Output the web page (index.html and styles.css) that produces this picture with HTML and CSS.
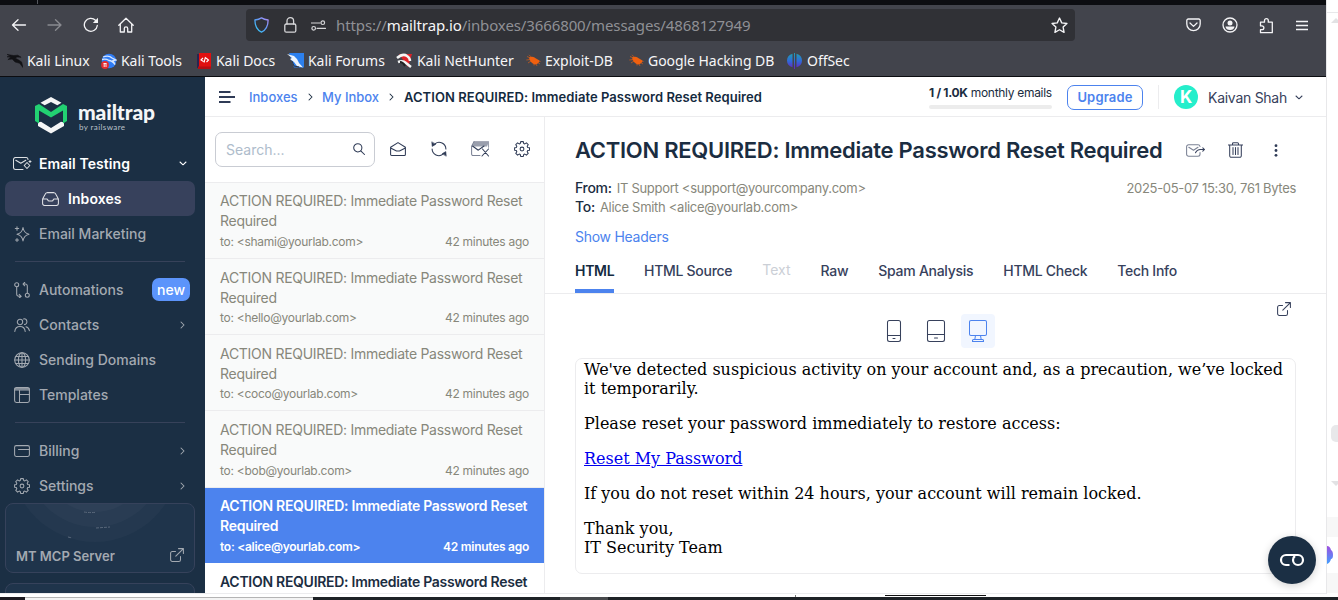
FILE: index.html
```html
<!DOCTYPE html>
<html lang="en">
<head>
<meta charset="utf-8">
<title>Mailtrap - My Inbox</title>
<link rel="stylesheet" href="styles.css">
</head>
<body>
<svg width="0" height="0" class="defs">
  <defs>
    <linearGradient id="gShield" x1="0" y1="1" x2="1" y2="0"><stop offset="0" stop-color="#2fd0f5"/><stop offset=".5" stop-color="#5a9cf5"/><stop offset="1" stop-color="#b48cf5"/></linearGradient>
    <linearGradient id="gOff" x1="0" y1="0" x2="0" y2="1"><stop offset="0" stop-color="#1fa0b0"/><stop offset=".5" stop-color="#2f6bd8"/><stop offset="1" stop-color="#6a1fc0"/></linearGradient>
    <linearGradient id="gBrain" x1="0" y1="0" x2="0" y2="1"><stop offset="0" stop-color="#a04fe0"/><stop offset="1" stop-color="#3fa0ff"/></linearGradient>
    <symbol id="gear" viewBox="0 0 16 16"><path d="M6.7.6h2.6l.4 1.8 1.1.5 1.6-1 1.8 1.8-1 1.6.4 1.1 1.9.4v2.4l-1.9.4-.4 1.1 1 1.6-1.8 1.8-1.6-1-1.1.5-.4 1.8H6.7l-.4-1.8-1.1-.5-1.6 1-1.8-1.8 1-1.6-.4-1.1L.6 9.200V6.800l1.800-.4.4-1.100-1-1.600L3.600 1.900l1.600 1 1.100-.5z"/><circle cx="8" cy="8" r="1.900"/></symbol>
    <symbol id="ext" viewBox="0 0 14 14"><path d="M5.500 3.500H2.300a1.700 1.700 0 0 0-1.700 1.700v6.500a1.700 1.700 0 0 0 1.700 1.700h6.500a1.700 1.700 0 0 0 1.700-1.700V8.500M8.500.6h4.900v4.900M13.200.8L5.800 8.200"/></symbol>
    <symbol id="crab" viewBox="0 0 15 13"><path d="M1 2.500l4 1.800M3 .8l3 3M.3 6l4-.5M2 9l3-2M14 10l-3-2M14.500 7.500L11 7M8 11.500L8 9M11 12L9.500 9" stroke="#c85a1c" stroke-width=".8"/><path d="M3 3.500Q7 1.500 10 4.500L13.500 6.500Q13 10 9 10.500Q4 9 3 3.500z" fill="#f0600f"/></symbol>
  </defs>
</svg>
<div class="screen">
  <div class="window">
    <div class="titlebar"><i></i></div>
    <div class="navbar">
      <svg class="ff b1" width="16" height="16" viewBox="0 0 16 16"><path d="M14.500 8H1.500M7 2.800L1.500 8l5.500 5.200"/></svg>
      <svg class="ff b2" width="16" height="16" viewBox="0 0 16 16"><path d="M1 8h13M8.500 2.800L14 8l-5.500 5.200"/></svg>
      <svg class="ff b3" width="16" height="16" viewBox="0 0 16 16"><path d="M14.300 8.500A6.500 6.500 0 1 1 12.500 3.300L14 5"/><path d="M9.800 6h5.200V.8z" fill="#f4f4f6" stroke="none"/></svg>
      <svg class="ff b4" width="16" height="16" viewBox="0 0 16 16"><path d="M.8 8.200L8 1.300l7.200 6.900M2.300 7v8h4v-3.500a1.700 1.700 0 0 1 3.400 0V15h4V7"/></svg>
      <div class="urlbar">
        <svg class="ff u1" width="15" height="16" viewBox="0 0 15 16"><path stroke="url(#gShield)" d="M7.500.9C5.500 2.200 3 2.800.9 3c0 6 2 10 6.600 12.100C12.100 13 14.100 9 14.100 3 12 2.800 9.500 2.200 7.500.9z"/></svg>
        <svg class="ff u2" width="13" height="16" viewBox="0 0 13 16"><rect x=".8" y="7" width="11" height="8.200" rx="1.500"/><path d="M3 7V4a3.300 3.300 0 0 1 6.600 0v3"/></svg>
        <svg class="ff u3" width="15" height="11" viewBox="0 0 15 11"><path d="M0 3h9M6 8.300h8.500"/><circle cx="11.800" cy="2.700" r="1.800"/><circle cx="2.700" cy="8.300" r="1.800"/></svg>
        <span class="url">https://<b>mailtrap.io</b>/inboxes/3666800/messages/4868127949</span>
        <svg class="ff star" width="17" height="17" viewBox="0 0 16 16"><path d="M8 1l2.100 4.500 4.900.6-3.600 3.400.9 4.900L8 12l-4.300 2.400.9-4.900L1 6.100l4.900-.6z"/></svg>
      </div>
      <svg class="ff m1" width="15" height="14" viewBox="0 0 15 14"><path d="M2.300 1h10.400A1.500 1.500 0 0 1 14.200 2.500V6a6.700 6.700 0 0 1-13.400 0V2.500A1.500 1.500 0 0 1 2.300 1zM4 5l3.500 3.400L11 5"/></svg>
      <svg class="ff m2" width="16" height="16" viewBox="0 0 16 16"><circle cx="8" cy="8" r="7"/><circle cx="8" cy="5.900" r="2.500" fill="#f4f4f6" stroke="none"/><path d="M3.500 9.500h9Q12 13 8 13t-4.500-3.500z" fill="#f4f4f6" stroke="none"/></svg>
      <svg class="ff m3" width="15" height="17" viewBox="0 0 15 17"><path d="M1.500 5.200h4V3.500a1.900 1.900 0 0 1 3.800 0v1.700h4v10.500h-11.800v-3H3a1.700 1.700 0 0 0 0-3.800H1.500z"/></svg>
      <svg class="ff m4" width="12" height="11" viewBox="0 0 12 11"><path d="M0 1.500h12M0 5.500h12M0 9.500h12"/></svg>
    </div>
    <div class="bookmarks">
      <a class="k1"><svg width="16" height="16" viewBox="0 0 17 16"><path d="M0 1l7 1.200 4.500-.4L15 4l-4.500-.2-1.500 1.200 3 1.700 3.500 2.300L17 15l-3.500-4.500L8.500 9 5.500 6 1 6.500 4 4 0 3.500 4 3z" fill="#111215" stroke="#111215" stroke-width=".6"/></svg>Kali Linux</a>
      <a class="k2"><svg width="16" height="16" viewBox="0 0 16 16"><circle cx="8" cy="8" r="7.300" fill="#2f7cf5"/><path d="M2 4q6-2 9 1l4 2-3 .5 2 4q-3-4-6-4-3-2-7-1" fill="none" stroke="#d4e5ff" stroke-width="1.300"/><circle cx="4" cy="12" r="3.900" fill="#e42c30"/><path d="M2.500 10.500h3M3.200 10.500v3.500M5 10.500v3.500" stroke="#fff" stroke-width=".9"/></svg>Kali Tools</a>
      <a class="k3"><svg width="14" height="16" viewBox="0 0 14 16"><path fill="#e01010" d="M2 0h12v16H2z"/><path fill="#2a2450" d="M0 1h2v14H0z"/><path d="M1 13.500h13V16H1z" fill="#b40d12"/><path d="M6 5L4 7 6.500 8.500M9 5L11.500 7 9.500 9M8.500 4L7 9.500" fill="none" stroke="#fff" stroke-width="1.100"/></svg>Kali Docs</a>
      <a class="k4"><svg width="17" height="15" viewBox="0 0 17 15"><path d="M2 0h15v14.500H7z" fill="#2c80ee"/><path d="M0 1l7 2 3 3 2 4 4 4.500-6-1.500-3-4-4-3 2-1z" fill="#eef4fb"/><path d="M5 8l2 5 5 1" stroke="#32343a" fill="none"/></svg>Kali Forums</a>
      <a class="k5"><svg width="17" height="15" viewBox="0 0 17 15"><path d="M3 1h13l-4 13z" fill="#dd2228"/><path d="M1 5q6-5 10-2 3 2 3 5M2 9q5-2 8 1l5 4" fill="none" stroke="#f3f3f3" stroke-width="2.500"/><path d="M4 9q3 0 5 4" fill="none" stroke="#222" stroke-width="2"/></svg>Kali NetHunter</a>
      <a class="k6"><svg width="15" height="13"><use href="#crab"/></svg>Exploit-DB</a>
      <a class="k7"><svg width="15" height="13"><use href="#crab"/></svg>Google Hacking DB</a>
      <a class="k8"><svg width="15" height="16" viewBox="0 0 15 16"><path d="M5.500 .8v13.400Q0 12.500 0 7.500T5.500 .8zM7 0h1v16H7zM9.500 .8Q15 2.500 15 7.500t-5.500 6.700z" fill="url(#gOff)"/></svg>OffSec</a>
    </div>
    <div class="app">
      <nav class="side">
        <div class="brand">
          <svg width="32" height="37" viewBox="0 0 32 37"><path d="M16 0l10.500 5.700-4.200 2.600L16 5 9.700 8.300 5.500 5.700zM16 36.500L3 29v-3.500l3-.8L16 31l10-6.300 3 .8V29z" fill="#f5f6f7"/><path d="M0 9l4-2 12 8 12-8 4 2v15l-4 2.500V13.500L16 20.500 4 13.500v13L0 24z" fill="#22d172"/></svg>
          <div class="word"><b>mailtrap</b><small>by railsware</small></div>
        </div>
        <a class="row white"><svg class="ic" width="19" height="14" viewBox="0 0 19 14"><path d="M10 12.500H2.500a2 2 0 0 1-2-2v-8a2 2 0 0 1 2-2h10.500a2 2 0 0 1 2 2M2.800 3.200L7.800 6.300 12.800 3.200M14 5.500l2.800 3L14 11.500l-2.800-3zM17 3.500v2M16 4.500h2"/></svg><span>Email Testing</span><svg class="ic chev" width="8" height="5" viewBox="0 0 8 5"><path d="M1 1l3 2.800L7 1"/></svg></a>
        <a class="row white sel"><svg class="ic" width="17" height="14" viewBox="0 0 17 14"><path d="M.6 7v4.500a2 2 0 0 0 2 2h11.800a2 2 0 0 0 2-2V7M.6 7L3 2.500A3 3 0 0 1 5.500.6h6A3 3 0 0 1 14 2.500L16.400 7M.6 7h4q1 0 1.200 1 .3 1 1.200 1h3q.9 0 1.200-1 .2-1 1.200-1h4"/></svg><span>Inboxes</span></a>
        <a class="row"><svg class="ic" width="16" height="16" viewBox="0 0 16 16"><path d="M9 1.500q.8 5.500 6 6.700-5.200 1.200-6 6.700-.8-5.500-6-6.700 5.200-1.200 6-6.700zM3 .8v3.400M1.300 2.500h3.400M3 12.500v3M1.500 14h3"/></svg><span>Email Marketing</span></a>
        <hr>
        <a class="row"><svg class="ic" width="16" height="16" viewBox="0 0 16 16"><circle cx="2.700" cy="2.700" r="2"/><circle cx="13.300" cy="13.300" r="2"/><path d="M2.700 4.800v7.500a2 2 0 0 0 2 2h2M5.200 12.300l2 2-2 1.700M13.300 11V4a2 2 0 0 0-2-2h-2M10.700.3L9 2l1.700 1.800"/></svg><span>Automations</span><em>new</em></a>
        <a class="row"><svg class="ic" width="16" height="14" viewBox="0 0 16 14"><circle cx="6" cy="4" r="2.700"/><path d="M.8 13.500Q1.300 8.500 6 8.500t5.200 5M9.500.9a2.800 2.800 0 1 1 1 5.700M12 8.700q2.800.8 3.400 4"/></svg><span>Contacts</span><svg class="ic chev" width="5" height="8" viewBox="0 0 5 8"><path d="M1 1l3 3-3 3"/></svg></a>
        <a class="row"><svg class="ic" width="16" height="16" viewBox="0 0 16 16"><circle cx="8" cy="8" r="7.300"/><ellipse cx="8" cy="8" rx="3.600" ry="7.300"/><path d="M.7 8h14.600M8 .7v14.600M1.800 4.500h12.400M1.800 11.500h12.400"/></svg><span>Sending Domains</span></a>
        <a class="row"><svg class="ic" width="16" height="16" viewBox="0 0 16 16"><rect x=".6" y=".6" width="14.800" height="14.800" rx="1.800"/><path d="M.6 3h14.800M5.500 3v12.400M5.500 7.500h9.900M.6 1.800h14.800"/></svg><span>Templates</span></a>
        <hr>
        <a class="row"><svg class="ic" width="16" height="12" viewBox="0 0 16 12"><rect x=".6" y=".6" width="14.800" height="10.800" rx="1.600"/><path d="M4.500 4.500h11"/></svg><span>Billing</span><svg class="ic chev" width="5" height="8" viewBox="0 0 5 8"><path d="M1 1l3 3-3 3"/></svg></a>
        <a class="row"><svg class="ic" width="16" height="16"><use href="#gear"/></svg><span>Settings</span><svg class="ic chev" width="5" height="8" viewBox="0 0 5 8"><path d="M1 1l3 3-3 3"/></svg></a>
        <div class="card">
          <svg class="rings" width="188" height="68" viewBox="0 0 188 68"><circle cx="89" cy="-46" r="84"/><circle cx="89" cy="-46" r="69"/><circle cx="89" cy="-46" r="54"/><path d="M90 24l14-1M78 8q6 1 12 .3M62 33l4 1" class="dash"/></svg>
          <span>MT MCP Server</span><svg class="ic" width="14" height="14"><use href="#ext"/></svg>
        </div>
        <div class="card next"><i></i></div>
      </nav>
      <div class="content">
        <header class="top">
          <svg class="burger" width="16" height="12" viewBox="0 0 16 12"><path d="M0 1h11.500M0 6h16M0 11h11.500"/></svg>
          <a class="c1">Inboxes</a><svg class="ic sep" width="5" height="8" viewBox="0 0 5 8"><path d="M1 1l3 3-3 3"/></svg><a class="c2">My Inbox</a><svg class="ic sep" width="5" height="8" viewBox="0 0 5 8"><path d="M1 1l3 3-3 3"/></svg><b class="c3">ACTION REQUIRED: Immediate Password Reset Required</b>
          <div class="usage"><p><b>1 / 1.0K</b> monthly emails</p><i></i></div>
          <button class="up">Upgrade</button>
          <div class="user"><span class="av">K</span><span class="nm">Kaivan Shah</span><svg class="ic" width="8" height="5" viewBox="0 0 8 5"><path d="M1 1l3 2.800L7 1"/></svg></div>
        </header>
        <div class="cols">
          <section class="list">
            <div class="tools">
              <div class="search"><span>Search...</span><svg class="ic" width="12" height="12" viewBox="0 0 12 12"><circle cx="4.800" cy="4.800" r="4.100"/><path d="M7.800 7.800l3.700 3.700"/></svg></div>
              <svg class="ic t1" width="16" height="14" viewBox="0 0 16 14"><path d="M.6 5.300L8 .6l7.400 4.700v7.100a1 1 0 0 1-1 1H1.600a1 1 0 0 1-1-1zM.6 6L6.500 9h3l5.900-3"/></svg>
              <svg class="ic t2" width="16" height="16" viewBox="0 0 16 16"><path d="M4 2.800a6.800 6.800 0 0 1 10.900 5.200M12 13.200A6.800 6.800 0 0 1 1.100 8"/><path d="M.8 1.200l.4 4.200 3.400-2zM15.200 14.800l-.4-4.200-3.400 2z" fill="#2f3b56" stroke-width=".6"/></svg>
              <svg class="ic t3" width="19" height="16" viewBox="0 0 19 16"><path d="M3 .5h15l-2 5H1.500z" fill="#9a9fad" stroke="none"/><path d="M3 .8h14.500v5.500" stroke="#9a9fad"/><path d="M9 14.500H2a1.400 1.400 0 0 1-1.400-1.400V5.200L3 .8" stroke="#7b8295"/><path d="M1.500 5l5.800 4.200L13 5M11.500 8l6 7M17.500 8l-6.500 7"/></svg>
              <svg class="ic t4" width="16" height="16"><use href="#gear"/></svg>
            </div>
            <article class="first"><h4>ACTION REQUIRED: Immediate Password Reset Required</h4><p><span>to: &lt;shami@yourlab.com&gt;</span><time>42 minutes ago</time></p></article>
            <article><h4>ACTION REQUIRED: Immediate Password Reset Required</h4><p><span>to: &lt;hello@yourlab.com&gt;</span><time>42 minutes ago</time></p></article>
            <article><h4>ACTION REQUIRED: Immediate Password Reset Required</h4><p><span>to: &lt;coco@yourlab.com&gt;</span><time>42 minutes ago</time></p></article>
            <article class="tall"><h4>ACTION REQUIRED: Immediate Password Reset Required</h4><p><span>to: &lt;bob@yourlab.com&gt;</span><time>42 minutes ago</time></p></article>
            <article class="on"><h4>ACTION REQUIRED: Immediate Password Reset Required</h4><p><span>to: &lt;alice@yourlab.com&gt;</span><time>42 minutes ago</time></p></article>
            <article class="unread"><h4>ACTION REQUIRED: Immediate Password Reset</h4></article>
          </section>
          <main class="msg">
            <div class="head">
              <h1>ACTION REQUIRED: Immediate Password Reset Required</h1>
              <svg class="ic a1" width="19" height="13" viewBox="0 0 19 13"><path d="M14 8.500v1.700a2 2 0 0 1-2 2H2.600a2 2 0 0 1-2-2V2.800a2 2 0 0 1 2-2H12a2 2 0 0 1 2 1.700M2.800 3.300l4.700 3 4.500-3" stroke="#7b8295"/><path d="M9.500 8.800q1.500-3.300 5-3.300h4M16.800 3.800l1.700 1.700-1.700 1.700"/></svg>
              <svg class="ic a2" width="15" height="16" viewBox="0 0 15 16"><path d="M.3 3h14.400M4.500 3V1.700A1 1 0 0 1 5.500.7h4a1 1 0 0 1 1 1V3M1.700 3v10.800a1.500 1.500 0 0 0 1.500 1.500h8.600a1.500 1.500 0 0 0 1.500-1.500V3M5 5.500v7M7.500 5.500v7M10 5.500v7"/></svg>
              <svg class="a3" width="4" height="13" viewBox="0 0 4 13"><circle cx="2" cy="1.700" r="1.400"/><circle cx="2" cy="6.500" r="1.400"/><circle cx="2" cy="11.300" r="1.400"/></svg>
            </div>
            <div class="meta"><div><p><b>From:</b><span>IT Support &lt;support@yourcompany.com&gt;</span></p><p><b>To:</b><span>Alice Smith &lt;alice@yourlab.com&gt;</span></p></div><time>2025-05-07 15:30, 761 Bytes</time></div>
            <a class="show">Show Headers</a>
            <div class="tabs"><span class="cur">HTML</span><span>HTML Source</span><span class="off">Text</span><span>Raw</span><span>Spam Analysis</span><span>HTML Check</span><span>Tech Info</span></div>
            <div class="devices">
              <svg class="ic" width="34" height="34" viewBox="0 0 34 34"><rect x="10.500" y="6.500" width="13" height="21" rx="2"/><path d="M10.500 21.500h13M16 24.500h2"/></svg>
              <svg class="ic" width="34" height="34" viewBox="0 0 34 34"><rect x="8.500" y="6.500" width="17" height="21" rx="2"/><path d="M8.500 20.500h17M15.500 24h3"/></svg>
              <svg class="ic act" width="34" height="34" viewBox="0 0 34 34"><rect x="8.500" y="6.500" width="17" height="15" rx="1.500"/><path d="M14.500 21.500l-.7 4M19.500 21.500l.7 4M11.500 27.500v-1q0-1 1-1h9q1 0 1 1v1z"/></svg>
              <svg class="ic ext" width="14" height="14"><use href="#ext"/></svg>
            </div>
            <div class="mail">
              <p>We've detected suspicious activity on your account and, as a precaution, we’ve locked it temporarily.</p>
              <p>Please reset your password immediately to restore access:</p>
              <p><a>Reset My Password</a></p>
              <p>If you do not reset within 24 hours, your account will remain locked.</p>
              <p>Thank you,<br>IT Security Team</p>
            </div>
          </main>
        </div>
      </div>
      <div class="fab"><svg width="26" height="14" viewBox="0 0 26 14"><path d="M10.500 12H7A5 5 0 0 1 7 2h12a5 5 0 1 1-5 5 5 5 0 0 1 2-4"/></svg></div>
    </div>
  </div>
  <aside class="edge"><i class="ln"></i><i class="tri"></i><i class="thumb"></i><i class="tri down"></i><div class="peek"><svg width="6" height="18" viewBox="0 0 6 18"><path d="M0 0q3 0 4 4 2 1 2 5t-2 4q-1 4-4 5z" fill="url(#gBrain)"/></svg></div></aside>
  <footer class="dock"><i class="d1"></i><i class="d2"></i><i class="d3"></i><i class="d4"></i><i class="d5"></i><i class="tick"></i><i class="bar"></i></footer>
</div>
</body>
</html>
```
FILE: styles.css
```css
* { box-sizing: border-box; }
body { margin: 0; font-family: Inter, "Liberation Sans", sans-serif; color: #1b2d41; font-size: 14px; }
p, h1, h4 { margin: 0; font-weight: 400; }
svg { flex: none; display: block; }
.defs { position: absolute; }
.screen { width: 1338px; height: 600px; overflow: hidden; display: grid; grid-template: 594px 6px / 1326px 12px; background: #fff; }
.window { display: flex; flex-direction: column; min-width: 0; }

/* browser chrome */
.titlebar { height: 5px; background: #0c0d11; padding-left: 37px; }
.titlebar i { display: block; width: 1px; height: 4px; background: #55575e; }
.navbar { height: 40px; background: #42444c; display: flex; align-items: center; }
.ff { fill: none; stroke: #f4f4f6; stroke-width: 1.3; stroke-linejoin: round; stroke-linecap: round; }
.b1 { margin-left: 11px; }
.b2 { margin-left: 20px; opacity: .4; }
.b3 { margin-left: 20px; }
.b4 { margin-left: 19px; }
.urlbar { width: 829px; height: 32px; margin-left: 112px; background: #303136; border-radius: 4px; display: flex; align-items: center; padding-left: 8px; }
.u2 { margin-left: 15px; opacity: .85; }
.u3 { margin-left: 14px; opacity: .85; stroke-width: 1.2; }
.url { font: 15px "Noto Sans", sans-serif; color: #8f9095; margin-left: 10px; letter-spacing: -.11px; white-space: nowrap; width: 416px; }
.url b { font-weight: 400; color: #f6f6f8; }
.star { margin-left: 299px; }
.m1 { margin-left: 111px; }
.m2 { margin-left: 21px; }
.m3 { margin-left: 21px; }
.m4 { margin-left: 22px; }
.bookmarks { height: 32px; background: #42444c; border-bottom: 1px solid #0c0d11; display: grid; grid-template-columns: 94px 96px 90px 109px 130px 103px 158px 1fr; padding-left: 7px; font: 14px/31px "Noto Sans", sans-serif; color: #f6f6f8; }
.bookmarks a { display: flex; align-items: center; gap: 4px; white-space: nowrap; letter-spacing: -.05px; }
.bookmarks .k3 { gap: 5px; }
.bookmarks .k8 { gap: 5px; }

/* sidebar */
.app { height: 517px; display: flex; position: relative; overflow: hidden; border-bottom: 1px solid #ececee; }
.side { width: 205px; background: #1b2f44; padding: 0 10px 0 5px; flex: none; overflow: hidden; }
.brand { height: 69px; padding: 20px 0 0 30px; display: flex; gap: 11px; }
.word { color: #f5f6f7; padding-top: 2px; }
.word b { display: block; font: 900 21px/26px Lato, sans-serif; letter-spacing: -.1px; }
.word small { display: block; font: 400 8px/9px Lato, sans-serif; letter-spacing: .4px; color: #b9c0c9; margin-top: -2px; padding-left: 1px; }
.ic { fill: none; stroke: currentColor; stroke-width: 1.05; stroke-linejoin: round; stroke-linecap: round; }
.row { height: 35px; display: flex; align-items: center; padding: 0 10px 0 9px; color: #a3a9b1; font-weight: 500; font-size: 14px; }
.row > .ic:first-child { margin-right: 9px; }
.row > span { flex: 1; }
.row.white { color: #fff; font-weight: 600; padding-right: 8px; }
.row.white > .ic:first-child { margin-left: -1px; margin-right: 7px; opacity: .85; }
.row.white > span { letter-spacing: .08px; }
.row.sel { background: #37415c; border-radius: 7px; padding-left: 37px; }
.row.sel > .ic:first-child { margin-left: 0; margin-right: 9px; }
.row em { font-style: normal; background: #5c94fb; color: #fff; border-radius: 7px; height: 23px; line-height: 23px; padding: 0 5px; margin-right: -5px; }
.side hr { border: 0; height: 1px; background: #37425a; margin: 10px 0 10px 10px; width: 170px; }
.card { height: 70px; border: 1px solid #36425b; border-radius: 8px; background: #1f344b; display: flex; align-items: flex-end; justify-content: space-between; padding: 0 10px 8px 10px; color: #a3a9b1; font-weight: 600; font-size: 13px; position: relative; overflow: hidden; }
.card .ic { margin-bottom: 2px; }
.rings { position: absolute; left: 0; top: 0; fill: #fff; fill-opacity: .025; }
.rings .dash { stroke: #5a687b; fill: none; stroke-dasharray: 3 1; }
.card.next { margin-top: 10px; }
.card.next i { position: absolute; left: 46px; top: 9px; width: 14px; height: 9px; border-radius: 50%; background: #41589e; }

/* top bar */
.content { flex: 1; min-width: 0; display: flex; flex-direction: column; }
.top { height: 40px; border-bottom: 1px solid #ececee; display: flex; align-items: center; padding: 1px 0 0 14px; white-space: nowrap; font-size: 13px; }
.burger { stroke: #2f3b56; stroke-width: 2; }
.top a { color: #4c83ee; font-weight: 500; }
.c1 { width: 49px; margin-left: 14px; }
.c2 { width: 57px; }
.sep { margin: 0 9px 0 10px; }
.c2 + .sep { margin: 0 10px 0 10px; }
.c3 { width: 358px; font-weight: 600; color: #142a40; font-size: 13px; letter-spacing: .05px; }
.usage { width: 123px; margin-left: 167px; font-size: 12px; letter-spacing: -.3px; }
.usage b { font-weight: 700; }
.usage p { line-height: 15px; margin-top: -1px; }
.usage i { display: block; height: 4px; border-radius: 2px; background: #ececec; margin-top: 5px; }
.up { margin: 0 0 0 15px; width: 76px; height: 25px; border: 1px solid #4c83ee; border-radius: 7px; background: #fff; color: #4c83ee; font: 600 13px Inter, sans-serif; padding: 0; letter-spacing: .15px; }
.user { display: flex; align-items: center; margin-left: 15px; border-left: 1px solid #ececee; height: 24px; padding-left: 15px; color: #37415c; font-size: 14px; }
.av { width: 24px; height: 24px; border-radius: 50%; background: #25eecb; color: #fff; font-weight: 700; font-size: 17px; line-height: 24px; text-align: center; }
.nm { margin-left: 10px; width: 79px; margin-right: 8px; letter-spacing: -.27px; }
.cols { flex: 1; display: flex; min-height: 0; }

/* message list */
.list { width: 340px; border-right: 1px solid #ececee; flex: none; overflow: hidden; }
.tools { height: 66px; display: flex; align-items: center; padding: 0 0 1px 10px; color: #2f3b56; border-bottom: 1px solid #ececee; }
.search { width: 160px; height: 35px; border: 1px solid #c9ccd3; border-radius: 7px; display: flex; align-items: center; justify-content: space-between; padding: 0 9px 0 10px; color: #aebccb; }
.search .ic { color: #2f3b56; }
.tools .t1 { margin-left: 15px; }
.t2 { margin-left: 25px; }
.t3 { margin-left: 24px; }
.t4 { margin-left: 24px; }
article { height: 76px; padding: 9px 15px 0; background: #f9fafa; color: #87877b; border-bottom: 1px solid #ececee; }
article h4 { font-size: 14px; line-height: 20px; letter-spacing: -.28px; }
article p { display: flex; justify-content: space-between; font-size: 12px; line-height: 15px; margin-top: 2px; letter-spacing: -.27px; }
article.first, article.on { padding-top: 8px; }
article.first p, article.on p, article.tall p { margin-top: 3px; }
article.tall { height: 77px; }
article.on { height: 75px; background: #4c83ee; color: #fff; border-bottom: 0; }
article.on h4, article.on p { font-weight: 600; }
article.unread { background: #fff; color: #1b2d41; }
article.unread h4 { font-weight: 600; white-space: nowrap; }

/* message view */
.msg { flex: 1; min-width: 0; }
.head { display: flex; align-items: center; padding-left: 30px; height: 66px; color: #37415c; }
h1 { width: 587px; white-space: nowrap; font-size: 22px; font-weight: 600; color: #1b2d41; letter-spacing: -.28px; }
.a1 { margin-left: 24px; }
.a2 { margin-left: 23px; }
.a3 { margin-left: 31px; fill: #2f3b56; }
.meta { display: flex; justify-content: space-between; padding: 0 30px; margin-top: -5px; line-height: 19px; font-size: 13px; color: #87877b; white-space: nowrap; letter-spacing: -.29px; }
.meta p { height: 19px; }
.meta time { padding-top: 1px; letter-spacing: -.31px; }
.meta b { font-weight: 500; color: #1b2d41; font-size: 14px; margin-right: 5px; }
.show { display: block; margin: 11px 0 0 30px; line-height: 20px; color: #4c83ee; letter-spacing: -.27px; }
.tabs { display: flex; gap: 30px; padding-left: 30px; margin-top: 9px; height: 38px; border-bottom: 1px solid #ececee; font-weight: 500; color: #37415c; line-height: 30px; white-space: nowrap; letter-spacing: -.28px; }
.tabs .cur { width: 39px; color: #142a40; font-weight: 600; border-bottom: 4px solid #4c83ee; height: 37px; border-radius: 2px 2px 0 0; }
.tabs .off { color: #cbcfd6; font-weight: 400; line-height: 28px; letter-spacing: 0; }
.devices { height: 64px; display: flex; align-items: flex-start; gap: 8px; padding: 20px 7px 0 332px; color: #37415c; }
.devices .act { background: #f1f6ff; color: #4c83ee; border-radius: 4px; }
.devices .ext { margin: -12px 0 0 274px; }
.mail { margin: 0 30px; height: 216px; border: 1px solid #ececee; border-radius: 7px; padding: 1px 8px; font: 16px/19px "DejaVu Serif", serif; color: #000; }
.mail p { margin-bottom: 16px; }
.mail a { color: #00e; text-decoration: underline; }
.fab { position: absolute; right: 10px; bottom: 9px; width: 48px; height: 48px; border-radius: 50%; background: #1b2f44; box-shadow: 0 2px 8px rgba(0,0,0,.18); display: grid; place-items: center; }
.fab svg { fill: none; stroke: #fff; stroke-width: 2.200; }

/* neighbouring window strip */
.edge { border-left: 1px solid #e8e8ea; background: #fff; display: flex; flex-direction: column; align-items: flex-end; overflow: hidden; }
.ln { width: 12px; height: 1px; margin-top: 12px; background: #e8e8ea; }
.tri { border: 5px solid transparent; border-top: 0; border-bottom-color: #e2e2e4; margin: 5px -3px 0 0; }
.thumb { width: 7px; height: 17px; margin-top: 402px; border-radius: 5px 0 0 5px; background: #e8e8ea; }
.tri.down { transform: rotate(180deg); margin-top: 39px; }
.peek { width: 11px; height: 76px; margin-top: 31px; background: #fff; border: solid #f7f7f7; border-width: 20px 0 20px; padding-top: 9px; align-self: flex-start; }

/* dock sliver along the bottom */
.dock { grid-column: 1 / 3; display: grid; grid-template-columns: 25px 288px 247px 48px 1fr; align-items: end; background: #fff; position: relative; }
.dock > i { height: 3px; background: #1e2226; }
.dock .d1 { background: #1c1a20; }
.dock .d2 { background: #f3f3f3; border-top: 1px solid #b4b4b4; }
.dock .d4 { background: #47494c; }
.dock .tick { position: absolute; left: 795px; top: 1px; width: 1px; height: 2px; background: #777; }
.dock .bar { position: absolute; left: 885px; top: 1px; width: 101px; height: 1px; background: #111; }
```
